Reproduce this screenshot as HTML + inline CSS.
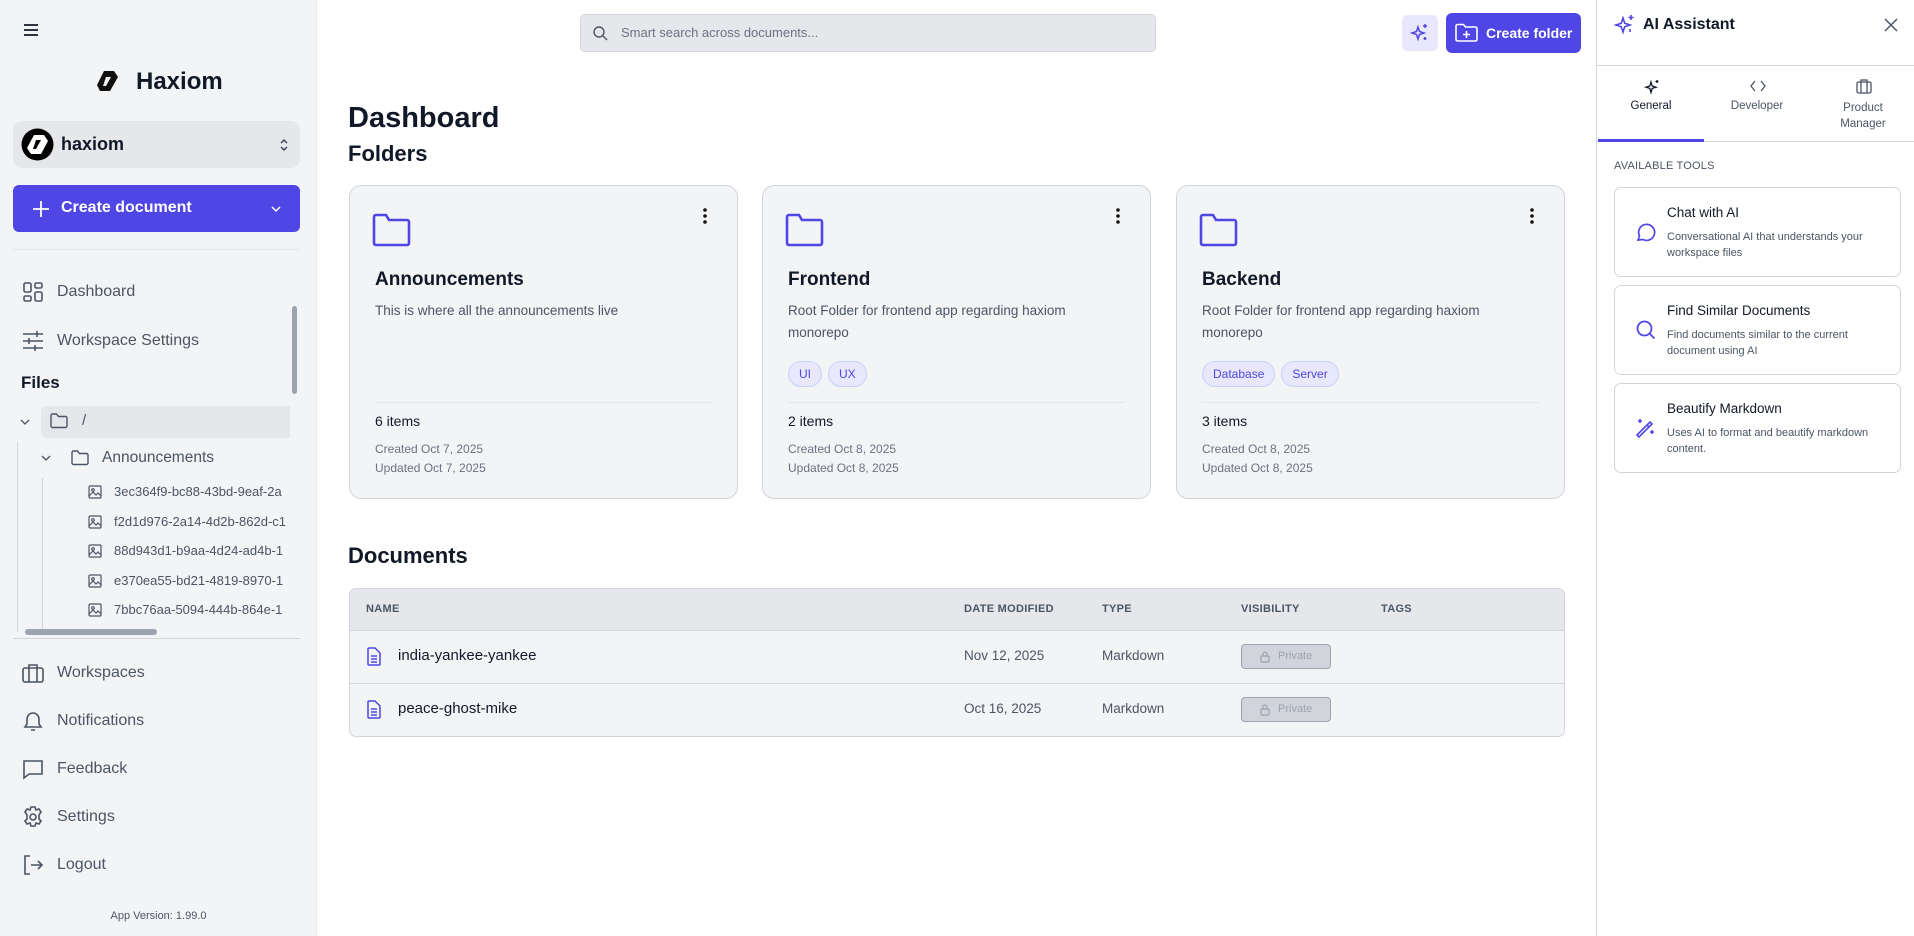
<!DOCTYPE html>
<html><head><meta charset="utf-8"><style>
*{box-sizing:border-box;margin:0;padding:0}
body{width:1914px;height:936px;overflow:hidden;background:#fff;font-family:"Liberation Sans",sans-serif;color:#111827;position:relative}
.a{position:absolute}
svg{display:block}
.side{left:0;top:0;width:317px;height:936px;background:#f3f4f6;border-right:1px solid #e5e7eb}
.nav{position:absolute;left:22px;display:flex;align-items:center;font-size:16px;color:#4b5563}
.nav svg{margin-right:13px}
.card{position:absolute;top:185px;width:389px;height:314px;background:#f3f4f6;border:1px solid #d1d5db;border-radius:12px}
.card .t{position:absolute;left:25px;top:83px;font-size:19px;font-weight:bold;color:#111827}
.card .d{position:absolute;left:25px;top:114px;width:340px;font-size:13.5px;line-height:22px;color:#4b5563}
.card .hr{position:absolute;left:25px;right:25px;top:216px;border-top:1px solid #e5e7eb}
.card .n{position:absolute;left:25px;top:227px;font-size:14px;color:#111827}
.card .c{position:absolute;left:25px;top:254px;font-size:12px;line-height:19px;color:#6b7280}
.tag{display:inline-block;height:26px;line-height:24px;padding:0 10px;border:1px solid #c7d2fe;background:#e8e7fb;border-radius:13px;font-size:12px;color:#4f46e5;margin-right:6px}
.kb{position:absolute;right:30px;top:22px}
.th{position:absolute;top:603px;font-size:11px;font-weight:bold;color:#4b5563;letter-spacing:.3px}
.tool{position:absolute;left:1614px;width:287px;border:1px solid #d1d5db;border-radius:7px;background:#fff}
.tool .tt{position:absolute;left:52px;top:17px;font-size:13.5px;color:#111827}
.tool .td{position:absolute;left:52px;top:41px;font-size:11px;line-height:16px;color:#4b5563;width:225px}
.tool svg{position:absolute;left:20px}
.file{position:absolute;left:88px;display:flex;align-items:center;font-size:13px;color:#4b5563;white-space:nowrap;width:202px;overflow:hidden}
.file svg{margin-right:12px;flex:none}
</style></head><body>
<div class="a side"></div>
<!-- hamburger -->
<svg class="a" style="left:22px;top:22px" width="18" height="16" viewBox="0 0 18 16"><path d="M2 3h14M2 8h14M2 13h14" stroke="#111827" stroke-width="1.8"/></svg>
<!-- logo -->
<svg class="a" style="left:96px;top:69px" width="24" height="24" viewBox="0 0 24 24"><path d="M8 2h10l4 6-8 14H4L1 16z" fill="#111"/><path d="M10 8h5l-5 9H7z" fill="#f3f4f6" transform="rotate(0)"/></svg>
<div class="a" style="left:136px;top:68px;font-size:24px;font-weight:bold;color:#111827">Haxiom</div>
<!-- workspace -->
<div class="a" style="left:13px;top:121px;width:287px;height:47px;background:#e5e7eb;border-radius:9px"></div>
<svg class="a" style="left:21px;top:128px" width="33" height="33" viewBox="0 0 33 33"><circle cx="16.5" cy="16.5" r="16" fill="#000"/><path d="M13 7h10l4 6-7 13H10l-4-6z" fill="#fff"/><path d="M15 12h5l-5 9h-3z" fill="#000"/></svg>
<div class="a" style="left:61px;top:134px;font-size:18px;font-weight:bold;color:#111827">haxiom</div>
<svg class="a" style="left:278px;top:137px" width="12" height="16" viewBox="0 0 12 16"><path d="M3 6l3-3 3 3M3 10l3 3 3-3" fill="none" stroke="#374151" stroke-width="1.4"/></svg>
<!-- create document -->
<div class="a" style="left:13px;top:185px;width:287px;height:47px;background:#4f46e5;border-radius:6px"></div>
<svg class="a" style="left:32px;top:200px" width="18" height="18" viewBox="0 0 18 18"><path d="M9 1v16M1 9h16" stroke="#fff" stroke-width="1.8"/></svg>
<div class="a" style="left:61px;top:199px;font-size:16px;font-weight:bold;color:#fff">Create document</div>
<svg class="a" style="left:269px;top:204px" width="14" height="10" viewBox="0 0 14 10"><path d="M3 3l4 4 4-4" fill="none" stroke="#fff" stroke-width="1.5"/></svg>
<div class="a" style="left:13px;top:249px;width:287px;border-top:1px solid #e5e7eb"></div>
<!-- nav -->
<div class="nav" style="top:281px"><svg width="22" height="22" viewBox="0 0 22 22" fill="none" stroke="#4b5563" stroke-width="1.6"><rect x="2" y="2" width="7" height="9" rx="1.5"/><rect x="13" y="2" width="7" height="5" rx="1.5"/><rect x="2" y="15" width="7" height="5" rx="1.5"/><rect x="13" y="11" width="7" height="9" rx="1.5"/></svg>Dashboard</div>
<div class="nav" style="top:330px"><svg width="22" height="22" viewBox="0 0 22 22" fill="none" stroke="#4b5563" stroke-width="1.6"><path d="M1 4h20M1 11h20M1 18h20M15 1v6M7 8v6M13 15v6"/></svg>Workspace Settings</div>
<div class="a" style="left:21px;top:373px;font-size:17px;font-weight:bold;color:#111827">Files</div>
<!-- tree -->
<div class="a" style="left:41px;top:406px;width:249px;height:32px;background:#e5e7eb;border-radius:6px 0 0 6px"></div>
<svg class="a" style="left:19px;top:416px" width="12" height="12" viewBox="0 0 12 12"><path d="M2 4l4 4 4-4" fill="none" stroke="#4b5563" stroke-width="1.3"/></svg>
<svg class="a" style="left:49px;top:412px" width="20" height="18" viewBox="0 0 20 18"><path d="M2 3.5a1.5 1.5 0 0 1 1.5-1.5h4l2 2.5h7a1.5 1.5 0 0 1 1.5 1.5v8a1.5 1.5 0 0 1-1.5 1.5h-13A1.5 1.5 0 0 1 2 14z" fill="none" stroke="#4b5563" stroke-width="1.4"/></svg>
<div class="a" style="left:82px;top:412px;font-size:15px;color:#4b5563">/</div>
<div class="a" style="left:17px;top:442px;height:190px;border-left:1px solid #d1d5db"></div>
<div class="a" style="left:42px;top:478px;height:154px;border-left:1px solid #d1d5db"></div>
<svg class="a" style="left:40px;top:452px" width="12" height="12" viewBox="0 0 12 12"><path d="M2 4l4 4 4-4" fill="none" stroke="#4b5563" stroke-width="1.3"/></svg>
<svg class="a" style="left:70px;top:449px" width="20" height="18" viewBox="0 0 20 18"><path d="M2 3.5a1.5 1.5 0 0 1 1.5-1.5h4l2 2.5h7a1.5 1.5 0 0 1 1.5 1.5v8a1.5 1.5 0 0 1-1.5 1.5h-13A1.5 1.5 0 0 1 2 14z" fill="none" stroke="#4b5563" stroke-width="1.4"/></svg>
<div class="a" style="left:102px;top:449px;font-size:15.5px;color:#4b5563">Announcements</div>
<div class="file" style="top:484px"><svg width="14" height="14" viewBox="0 0 14 14" fill="none" stroke="#4b5563" stroke-width="1.2"><rect x="1" y="1" width="12" height="12" rx="1"/><circle cx="5" cy="5" r="1.3"/><path d="M1 11l4-4 3 3 2-2 3 3"/></svg>3ec364f9-bc88-43bd-9eaf-2a</div>
<div class="file" style="top:514px"><svg width="14" height="14" viewBox="0 0 14 14" fill="none" stroke="#4b5563" stroke-width="1.2"><rect x="1" y="1" width="12" height="12" rx="1"/><circle cx="5" cy="5" r="1.3"/><path d="M1 11l4-4 3 3 2-2 3 3"/></svg>f2d1d976-2a14-4d2b-862d-c1</div>
<div class="file" style="top:543px"><svg width="14" height="14" viewBox="0 0 14 14" fill="none" stroke="#4b5563" stroke-width="1.2"><rect x="1" y="1" width="12" height="12" rx="1"/><circle cx="5" cy="5" r="1.3"/><path d="M1 11l4-4 3 3 2-2 3 3"/></svg>88d943d1-b9aa-4d24-ad4b-1</div>
<div class="file" style="top:573px"><svg width="14" height="14" viewBox="0 0 14 14" fill="none" stroke="#4b5563" stroke-width="1.2"><rect x="1" y="1" width="12" height="12" rx="1"/><circle cx="5" cy="5" r="1.3"/><path d="M1 11l4-4 3 3 2-2 3 3"/></svg>e370ea55-bd21-4819-8970-1</div>
<div class="file" style="top:602px"><svg width="14" height="14" viewBox="0 0 14 14" fill="none" stroke="#4b5563" stroke-width="1.2"><rect x="1" y="1" width="12" height="12" rx="1"/><circle cx="5" cy="5" r="1.3"/><path d="M1 11l4-4 3 3 2-2 3 3"/></svg>7bbc76aa-5094-444b-864e-1</div>
<div class="a" style="left:292px;top:306px;width:5px;height:88px;background:#9ca3af;border-radius:3px"></div>
<div class="a" style="left:25px;top:629px;width:132px;height:6px;background:#9ca3af;border-radius:3px"></div>
<div class="a" style="left:13px;top:638px;width:287px;border-top:1px solid #d1d5db"></div>
<div class="nav" style="top:662px"><svg width="22" height="22" viewBox="0 0 22 22" fill="none" stroke="#4b5563" stroke-width="1.6"><rect x="1" y="6" width="20" height="14" rx="2"/><path d="M7 6V3h8v3M7 6v14M15 6v14"/></svg>Workspaces</div>
<div class="nav" style="top:710px"><svg width="22" height="22" viewBox="0 0 22 22" fill="none" stroke="#4b5563" stroke-width="1.6"><path d="M5 9a6 6 0 0 1 12 0v5l2 3H3l2-3zM9 20h4"/></svg>Notifications</div>
<div class="nav" style="top:758px"><svg width="22" height="22" viewBox="0 0 22 22" fill="none" stroke="#4b5563" stroke-width="1.6"><path d="M2 3h18v13H7l-5 4z"/></svg>Feedback</div>
<div class="nav" style="top:806px"><svg width="22" height="22" viewBox="0 0 22 22" fill="none" stroke="#4b5563" stroke-width="1.6"><circle cx="11" cy="11" r="3"/><path d="M9 1h4l1 3 3-1 2 3-2 3v4l2 2-2 3-3-1-1 3H9l-1-3-3 1-2-3 2-2V9L3 6l2-3 3 1z"/></svg>Settings</div>
<div class="nav" style="top:854px"><svg width="22" height="22" viewBox="0 0 22 22" fill="none" stroke="#4b5563" stroke-width="1.6"><path d="M8 2H3v18h5M9 11h11M16 7l4 4-4 4"/></svg>Logout</div>
<div class="a" style="left:0;width:317px;top:910px;text-align:center;font-size:11px;color:#4b5563">App Version: 1.99.0</div>

<!-- top bar -->
<div class="a" style="left:580px;top:14px;width:576px;height:38px;background:#e5e7eb;border:1px solid #d1d5db;border-radius:5px"></div>
<svg class="a" style="left:592px;top:25px" width="16" height="16" viewBox="0 0 16 16" fill="none" stroke="#4b5563" stroke-width="1.4"><circle cx="7" cy="7" r="5"/><path d="M11 11l4 4"/></svg>
<div class="a" style="left:621px;top:25px;font-size:13px;color:#6b7280">Smart search across documents...</div>
<div class="a" style="left:1402px;top:15px;width:36px;height:36px;background:#e8e7fb;border-radius:5px"></div>
<svg class="a" style="left:1410px;top:23px" width="20" height="20" viewBox="0 0 20 20" fill="none" stroke="#4f46e5" stroke-width="1.5"><path d="M8 4l1.5 4.5L14 10l-4.5 1.5L8 16l-1.5-4.5L2 10l4.5-1.5zM15 1v4M13 3h4M15 14v3M13.5 15.5h3"/></svg>
<div class="a" style="left:1446px;top:13px;width:135px;height:40px;background:#4f46e5;border-radius:6px"></div>
<svg class="a" style="left:1455px;top:23px" width="23" height="20" viewBox="0 0 23 20" fill="none" stroke="#fff" stroke-width="1.6"><path d="M1 3a1.5 1.5 0 0 1 1.5-1.5h6l2 2.5h10a1.5 1.5 0 0 1 1.5 1.5v11a1.5 1.5 0 0 1-1.5 1.5h-18A1.5 1.5 0 0 1 1 16.5zM11.5 8v7M8 11.5h7"/></svg>
<div class="a" style="left:1486px;top:25px;font-size:14px;font-weight:bold;color:#fff">Create folder</div>

<div class="a" style="left:348px;top:102px;font-size:29px;font-weight:bold;color:#111827">Dashboard</div>
<div class="a" style="left:348px;top:141px;font-size:22px;font-weight:bold;color:#111827">Folders</div>

<!-- cards -->
<div class="card" style="left:349px">
<svg class="a" style="left:22px;top:27px" width="40" height="34" viewBox="0 0 40 34" fill="none" stroke="#4f46e5" stroke-width="2.6"><path d="M2 4a2 2 0 0 1 2-2h10l3 5h18a2 2 0 0 1 2 2v21a2 2 0 0 1-2 2H4a2 2 0 0 1-2-2z"/></svg>
<svg class="kb" width="4" height="16" viewBox="0 0 4 16" fill="#111"><circle cx="2" cy="2" r="1.8"/><circle cx="2" cy="8" r="1.8"/><circle cx="2" cy="14" r="1.8"/></svg>
<div class="t">Announcements</div><div class="d">This is where all the announcements live</div>
<div class="hr"></div><div class="n">6 items</div><div class="c">Created Oct 7, 2025<br>Updated Oct 7, 2025</div></div>
<div class="card" style="left:762px">
<svg class="a" style="left:22px;top:27px" width="40" height="34" viewBox="0 0 40 34" fill="none" stroke="#4f46e5" stroke-width="2.6"><path d="M2 4a2 2 0 0 1 2-2h10l3 5h18a2 2 0 0 1 2 2v21a2 2 0 0 1-2 2H4a2 2 0 0 1-2-2z"/></svg>
<svg class="kb" width="4" height="16" viewBox="0 0 4 16" fill="#111"><circle cx="2" cy="2" r="1.8"/><circle cx="2" cy="8" r="1.8"/><circle cx="2" cy="14" r="1.8"/></svg>
<div class="t">Frontend</div><div class="d">Root Folder for frontend app regarding haxiom monorepo</div>
<div class="a" style="left:25px;top:175px"><span class="tag">UI</span><span class="tag">UX</span></div>
<div class="hr"></div><div class="n">2 items</div><div class="c">Created Oct 8, 2025<br>Updated Oct 8, 2025</div></div>
<div class="card" style="left:1176px">
<svg class="a" style="left:22px;top:27px" width="40" height="34" viewBox="0 0 40 34" fill="none" stroke="#4f46e5" stroke-width="2.6"><path d="M2 4a2 2 0 0 1 2-2h10l3 5h18a2 2 0 0 1 2 2v21a2 2 0 0 1-2 2H4a2 2 0 0 1-2-2z"/></svg>
<svg class="kb" width="4" height="16" viewBox="0 0 4 16" fill="#111"><circle cx="2" cy="2" r="1.8"/><circle cx="2" cy="8" r="1.8"/><circle cx="2" cy="14" r="1.8"/></svg>
<div class="t">Backend</div><div class="d">Root Folder for frontend app regarding haxiom monorepo</div>
<div class="a" style="left:25px;top:175px"><span class="tag">Database</span><span class="tag">Server</span></div>
<div class="hr"></div><div class="n">3 items</div><div class="c">Created Oct 8, 2025<br>Updated Oct 8, 2025</div></div>

<div class="a" style="left:348px;top:543px;font-size:22px;font-weight:bold;color:#111827">Documents</div>
<!-- table -->
<div class="a" style="left:349px;top:588px;width:1216px;height:149px;border:1px solid #d1d5db;border-radius:7px;background:#f3f4f6;overflow:hidden">
<div style="height:42px;background:#e5e7eb;border-bottom:1px solid #d1d5db"></div>
<div style="height:53px;border-bottom:1px solid #d1d5db"></div>
</div>
<div class="th" style="left:366px">NAME</div><div class="th" style="left:964px">DATE MODIFIED</div><div class="th" style="left:1102px">TYPE</div><div class="th" style="left:1241px">VISIBILITY</div><div class="th" style="left:1381px">TAGS</div>
<svg class="a" style="left:367px;top:647px" width="14" height="19" viewBox="0 0 14 19" fill="none" stroke="#4f46e5" stroke-width="1.5"><path d="M1 2a1 1 0 0 1 1-1h6l5 5v11a1 1 0 0 1-1 1H2a1 1 0 0 1-1-1zM4 9h6M4 12h6M4 15h6"/></svg>
<div class="a" style="left:398px;top:647px;font-size:15px;color:#111827">india-yankee-yankee</div>
<div class="a" style="left:964px;top:648px;font-size:13.5px;color:#4b5563">Nov 12, 2025</div>
<div class="a" style="left:1102px;top:648px;font-size:13.5px;color:#4b5563">Markdown</div>
<div class="a" style="left:1241px;top:644px;width:90px;height:25px;border:1px solid #9ca3af;background:#d1d5db;border-radius:4px;font-size:11px;color:#9ca3af;padding:5px 0 0 36px">Private</div>
<svg class="a" style="left:1260px;top:650px" width="10" height="13" viewBox="0 0 10 13" fill="none" stroke="#9ca3af" stroke-width="1.2"><rect x="1" y="6" width="8" height="6" rx="1"/><path d="M3 6V4a2 2 0 0 1 4 0v2"/></svg>
<svg class="a" style="left:367px;top:700px" width="14" height="19" viewBox="0 0 14 19" fill="none" stroke="#4f46e5" stroke-width="1.5"><path d="M1 2a1 1 0 0 1 1-1h6l5 5v11a1 1 0 0 1-1 1H2a1 1 0 0 1-1-1zM4 9h6M4 12h6M4 15h6"/></svg>
<div class="a" style="left:398px;top:700px;font-size:15px;color:#111827">peace-ghost-mike</div>
<div class="a" style="left:964px;top:701px;font-size:13.5px;color:#4b5563">Oct 16, 2025</div>
<div class="a" style="left:1102px;top:701px;font-size:13.5px;color:#4b5563">Markdown</div>
<div class="a" style="left:1241px;top:697px;width:90px;height:25px;border:1px solid #9ca3af;background:#d1d5db;border-radius:4px;font-size:11px;color:#9ca3af;padding:5px 0 0 36px">Private</div>
<svg class="a" style="left:1260px;top:703px" width="10" height="13" viewBox="0 0 10 13" fill="none" stroke="#9ca3af" stroke-width="1.2"><rect x="1" y="6" width="8" height="6" rx="1"/><path d="M3 6V4a2 2 0 0 1 4 0v2"/></svg>

<!-- right panel -->
<div class="a" style="left:1596px;top:0;width:1px;height:936px;background:#d1d5db"></div>
<svg class="a" style="left:1614px;top:13px" width="22" height="22" viewBox="0 0 22 22" fill="none" stroke="#4f46e5" stroke-width="1.6"><path d="M9 5l1.7 5.3L16 12l-5.3 1.7L9 19l-1.7-5.3L2 12l5.3-1.7zM17 2v5M14.5 4.5h5M16 16v3"/></svg>
<div class="a" style="left:1643px;top:16px;font-size:16px;font-weight:bold;color:#111827">AI Assistant</div>
<svg class="a" style="left:1884px;top:18px" width="14" height="14" viewBox="0 0 14 14"><path d="M1 1l12 12M13 1L1 13" stroke="#4b5563" stroke-width="1.5"/></svg>
<div class="a" style="left:1597px;top:65px;width:317px;border-top:1px solid #d1d5db"></div>
<svg class="a" style="left:1644px;top:79px" width="16" height="16" viewBox="0 0 16 16" fill="none" stroke="#111827" stroke-width="1.3"><path d="M7 3l1.2 4L12 8.2 8.2 9.4 7 13.5 5.8 9.4 2 8.2 5.8 7zM13 1v3M11.5 2.5h3"/></svg>
<div class="a" style="left:1598px;top:100px;width:106px;text-align:center;font-size:11.5px;color:#111827">General</div>
<svg class="a" style="left:1750px;top:80px" width="16" height="12" viewBox="0 0 16 12" fill="none" stroke="#4b5563" stroke-width="1.3"><path d="M5 1L1 6l4 5M11 1l4 5-4 5"/></svg>
<div class="a" style="left:1704px;top:100px;width:106px;text-align:center;font-size:11.5px;color:#4b5563">Developer</div>
<svg class="a" style="left:1856px;top:78px" width="16" height="16" viewBox="0 0 16 16" fill="none" stroke="#4b5563" stroke-width="1.3"><rect x="1" y="4" width="14" height="11" rx="1.5"/><path d="M5 4V2h6v2M5 4v11M11 4v11"/></svg>
<div class="a" style="left:1810px;top:100px;width:106px;text-align:center;font-size:11.5px;line-height:16px;color:#4b5563">Product<br>Manager</div>
<div class="a" style="left:1597px;top:141px;width:317px;border-top:1px solid #d1d5db"></div>
<div class="a" style="left:1598px;top:139px;width:106px;height:3px;background:#4f46e5"></div>
<div class="a" style="left:1614px;top:160px;font-size:11px;color:#4b5563;letter-spacing:.2px">AVAILABLE TOOLS</div>
<div class="tool" style="top:187px;height:90px"><svg style="top:33px" width="22" height="22" viewBox="0 0 22 22" fill="none" stroke="#4f46e5" stroke-width="1.7"><path d="M3 19l1.5-4A8 8 0 1 1 8 18.5z"/></svg><div class="tt">Chat with AI</div><div class="td">Conversational AI that understands your workspace files</div></div>
<div class="tool" style="top:285px;height:90px"><svg style="top:33px" width="22" height="22" viewBox="0 0 22 22" fill="none" stroke="#4f46e5" stroke-width="1.8"><circle cx="9.5" cy="9.5" r="7"/><path d="M14.5 14.5l5 5"/></svg><div class="tt">Find Similar Documents</div><div class="td">Find documents similar to the current document using AI</div></div>
<div class="tool" style="top:383px;height:90px"><svg style="top:33px" width="22" height="22" viewBox="0 0 22 22" fill="none" stroke="#4f46e5" stroke-width="1.6"><path d="M2 18l13-13 2 2L4 20zM12 8l2 2M5 2v4M3 4h4M17 13v4M15 15h4"/></svg><div class="tt">Beautify Markdown</div><div class="td">Uses AI to format and beautify markdown content.</div></div>
</body></html>
